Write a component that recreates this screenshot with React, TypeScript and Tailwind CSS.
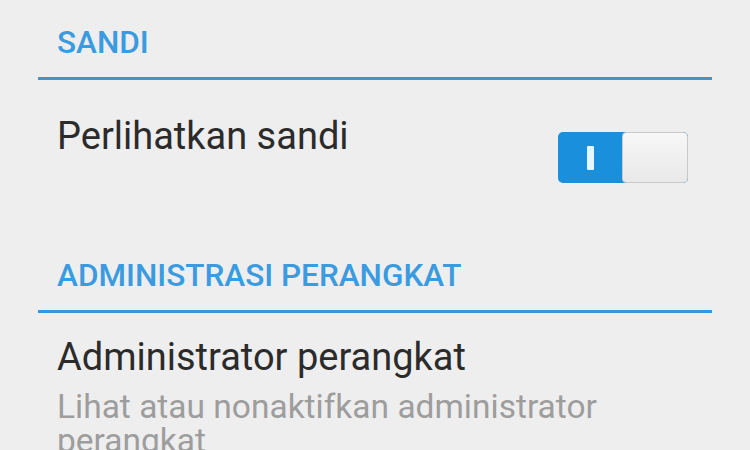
import React from "react";

function SectionHeader({ label }: { label: string }) {
  return (
    <div className="mx-[38px] border-b-[3px] border-[#3c95d4] pb-[16px] pl-[19px]">
      <div className="text-[31.5px] leading-[36px] font-medium text-[#3a9be0]">{label}</div>
    </div>
  );
}

function Toggle() {
  return (
    <div className="flex h-[51px] w-[130px] overflow-hidden rounded-[5px] bg-[#1a8fdc]">
      <div className="flex w-[64px] items-center justify-center">
        <div className="h-[24px] w-[7px] rounded-[1px] bg-[#e6f6ff]" />
      </div>
      <div className="flex-1 rounded-[4px] border border-[#c9c9c9] bg-gradient-to-b from-[#f7f7f7] to-[#e9e9e9]" />
    </div>
  );
}

export default function App() {
  return (
    <div
      className="h-[450px] w-[750px] overflow-hidden bg-[#eeeeee]"
      style={{ fontFamily: "Roboto, 'Noto Sans', sans-serif" }}
    >
      <div className="pt-[25px]">
        <SectionHeader label="SANDI" />
      </div>
      <div className="mx-[38px] flex items-start justify-between pl-[19px] pr-[24px] pt-[34px]">
        <div className="text-[38px] leading-[44px] text-[#2b2b2b]">Perlihatkan sandi</div>
        <div className="pt-[18px]">
          <Toggle />
        </div>
      </div>
      <div className="pt-[75px]">
        <SectionHeader label="ADMINISTRASI PERANGKAT" />
      </div>
      <div className="mx-[38px] pl-[19px] pt-[22px]">
        <div className="text-[38px] leading-[44px] text-[#2b2b2b]">Administrator perangkat</div>
        <div className="mt-[11px] w-[600px] text-[33.5px] leading-[34px] text-[#9d9d9d]">
          Lihat atau nonaktifkan administrator perangkat
        </div>
      </div>
    </div>
  );
}
